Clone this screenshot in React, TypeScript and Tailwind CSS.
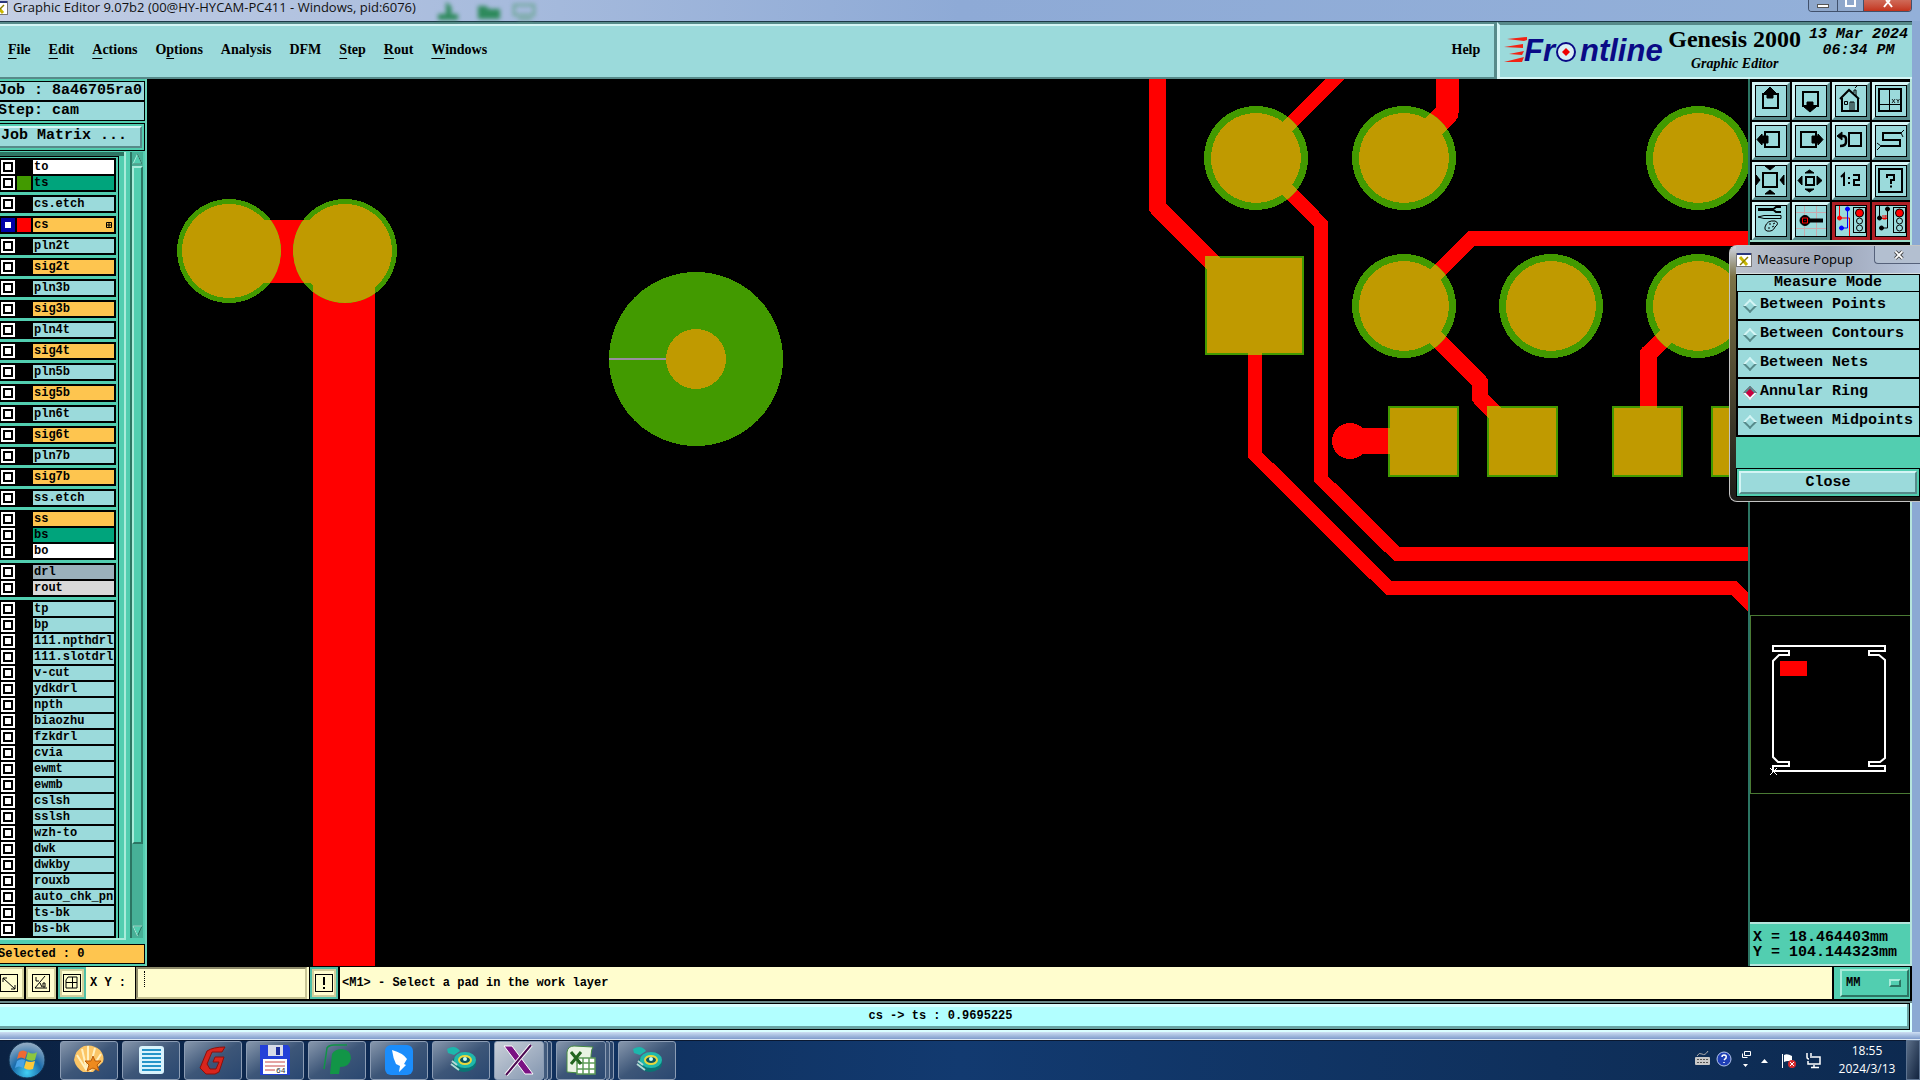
import type { ReactNode } from "react";

type Layer = { name: string; bg: string; swatch?: string; work?: boolean };

const AQUA = "bg-[#9bdadb]";
const ORANGE = "bg-[#fec54f]";

const mono = "font-['Liberation_Mono',monospace] font-bold";
const serif = "font-['Liberation_Serif',serif] font-bold";
const sans = "font-['Open_Sans','Noto_Sans',sans-serif]";
const raised = "border-t-[#d4f5f5] border-l-[#d4f5f5] border-b-[#578a8a] border-r-[#578a8a]";

const innerLayers: Layer[][] = ["2t", "3b", "4t", "5b", "6t", "7b"].flatMap((n) => [
  [{ name: `pln${n}`, bg: AQUA }],
  [{ name: `sig${n}`, bg: ORANGE }],
]);

const drawingLayers = [
  "tp", "bp", "111.npthdrl", "111.slotdrl", "v-cut", "ydkdrl", "npth", "biaozhu",
  "fzkdrl", "cvia", "ewmt", "ewmb", "cslsh", "sslsh", "wzh-to", "dwk", "dwkby",
  "rouxb", "auto_chk_pnl", "ts-bk", "bs-bk",
];

const layerGroups: Layer[][] = [
  [
    { name: "to", bg: "bg-white" },
    { name: "ts", bg: "bg-[#00a47c]", swatch: "bg-[#429a00]" },
  ],
  [{ name: "cs.etch", bg: AQUA }],
  [{ name: "cs", bg: ORANGE, swatch: "bg-[#ff0000]", work: true }],
  ...innerLayers,
  [{ name: "ss.etch", bg: AQUA }],
  [
    { name: "ss", bg: ORANGE },
    { name: "bs", bg: "bg-[#00a47c]" },
    { name: "bo", bg: "bg-white" },
  ],
  [
    { name: "drl", bg: "bg-[#9bb1bb]" },
    { name: "rout", bg: "bg-[#d9d9d9]" },
  ],
  drawingLayers.map((name) => ({ name, bg: AQUA })),
];

const menus = [
  ["", "F", "ile"],
  ["", "E", "dit"],
  ["", "A", "ctions"],
  ["O", "p", "tions"],
  ["Analysis", "", ""],
  ["DFM", "", ""],
  ["", "S", "tep"],
  ["", "R", "out"],
  ["", "W", "indows"],
];

const measureModes = [
  "Between Points",
  "Between Contours",
  "Between Nets",
  "Annular Ring",
  "Between Midpoints",
];

const TrafficLight = () => (
  <>
    <rect x="18.5" y="2.5" width="12" height="25" />
    <circle cx="24.5" cy="8" r="4" fill="#f00" />
    <circle cx="24.5" cy="16" r="3" />
    <circle cx="24.5" cy="23" r="3" />
  </>
);

const tools: { label: string; red?: boolean; icon: ReactNode }[] = [
  {
    label: "Pan up",
    icon: (
      <>
        <rect x="8" y="9" width="15" height="14" strokeWidth="2" />
        <path d="M15 2 L21 8 H18 V13 H12 V8 H9 Z" fill="#000" />
      </>
    ),
  },
  {
    label: "Pan down",
    icon: (
      <>
        <rect x="8" y="7" width="15" height="14" strokeWidth="2" />
        <path d="M15 27 L21 22 H18 V17 H12 V22 H9 Z" fill="#000" />
      </>
    ),
  },
  {
    label: "Home",
    icon: (
      <>
        <path d="M5 14 L14 5 L24 14 M7 13 V26 H23 V13" strokeWidth="2" />
        <path d="M19 8 V5 H21 V11 M20 3 L22 1 M15 26 V17 H19 V26 M17 17 V26 M9.500 16.500 H12.500 V19.500 H9.500 Z" />
      </>
    ),
  },
  {
    label: "Window XY",
    icon: (
      <>
        <rect x="4" y="4" width="22" height="22" strokeWidth="2" />
        <path d="M14.500 4 V26 M4 19.500 H26" />
        <path d="M17 14 L20 18 M20 14 L17 18 M21.500 14 L23 16 L24.500 14 M23 16 V18" strokeWidth=".8" />
      </>
    ),
  },
  {
    label: "Pan left",
    icon: (
      <>
        <rect x="10" y="7" width="14" height="15" strokeWidth="2" />
        <path d="M2 14.500 L7 9 V11 H13 V18 H7 V20 Z" fill="#000" />
      </>
    ),
  },
  {
    label: "Pan right",
    icon: (
      <>
        <rect x="6" y="7" width="15" height="15" strokeWidth="2" />
        <path d="M28 14.500 L23 9 V11 H17 V18 H23 V20 Z" fill="#000" />
      </>
    ),
  },
  {
    label: "Previous view",
    icon: (
      <>
        <rect x="14" y="8" width="12" height="13" strokeWidth="2" />
        <path d="M5 11 H8 Q11 11 11 14 V17 Q11 21 5 21" strokeWidth="2.500" />
        <path d="M2 11 L7 7 V15 Z" fill="#000" />
      </>
    ),
  },
  {
    label: "Serpentine",
    icon: (
      <>
        <path d="M26 8 H8 V15 H25 V21 H6" strokeWidth="2" />
        <path d="M26 8 L29 5 M26 8 L28 12 M6 21 L2 18 M6 21 L2 25" />
      </>
    ),
  },
  {
    label: "Zoom out",
    icon: (
      <>
        <rect x="8" y="8" width="14" height="14" strokeWidth="2" />
        <path d="M10 1 H20 L15 5 Z M10 29 H20 L15 25 Z M1 10 V20 L5 15 Z M29 10 V20 L25 15 Z" fill="#000" />
      </>
    ),
  },
  {
    label: "Zoom in",
    icon: (
      <>
        <rect x="11" y="12" width="8" height="8" strokeWidth="2" />
        <path d="M10 8 H19 L14.500 5 Z M10 24 H19 L14.500 27 Z M7 11 V20 L3 15.500 Z M22 11 V20 L27 15.500 Z" fill="#000" />
      </>
    ),
  },
  {
    label: "Scale",
    icon: (
      <path d="M6 12 L9 9 V21 M13 13 H15 M13 18 H15 M18 10 H24 V15 H19 V20 H25" strokeWidth="2" />
    ),
  },
  {
    label: "Help",
    icon: (
      <>
        <rect x="4" y="4" width="23" height="23" strokeWidth="2" />
        <path d="M12 13 V10 H19 V15 H16 V19 M15 21.500 H17" strokeWidth="2" />
      </>
    ),
  },
  {
    label: "Edit tools",
    icon: (
      <>
        <path d="M3 4.500 H18" strokeWidth="3" />
        <path d="M26 2 H21 L18 4.500 L21 7 H26" strokeWidth="2" />
        <path d="M3 12 L9 10.500 H26 V13.500 H9 Z" />
        <path d="M10 22 Q12 15 20 16 Q25 18 20 22 Q18 27 12 26 Q9 25 10 22 M14 19 H16 M18 19 L20 18 M13 23 H15 M17 22 L19 21" />
      </>
    ),
  },
  {
    label: "Pad",
    icon: (
      <>
        <path d="M9.500 1 V31 M21.500 1 V31 M1 7.500 H31 M1 23.500 H31" stroke="#c9a9ad" />
        <path d="M14 15.500 H28" strokeWidth="4" />
        <circle cx="10" cy="15.500" r="5" fill="#000" />
        <path d="M7.500 13 H12.500 V18 H7.500 Z M10 15 V16" stroke="#f00" />
      </>
    ),
  },
  {
    label: "Net highlight",
    red: true,
    icon: (
      <>
        <path d="M4.500 1 V13 H14.500 V31" stroke="#f00" />
        <path d="M12.500 4 V23 H6" stroke="#00f" />
        <circle cx="12.500" cy="4" r="2" fill="#00f" stroke="#00f" />
        <circle cx="6.500" cy="23" r="2" fill="#00f" stroke="#00f" />
        <circle cx="4.500" cy="13" r="2" fill="#f00" stroke="#f00" />
        <TrafficLight />
      </>
    ),
  },
  {
    label: "Net check",
    red: true,
    icon: (
      <>
        <path d="M4.500 1 V13 H7 M12.500 4 V23 H7" />
        <circle cx="12.500" cy="4" r="2" fill="#000" />
        <circle cx="6.500" cy="23" r="2" fill="#000" />
        <circle cx="4.500" cy="13" r="2" fill="#000" />
        <path d="M8 10 V14 H11 V10 M10 10 V14 M7 13.500 H12" stroke="#e00" />
        <TrafficLight />
      </>
    ),
  },
];

const XLogo = () => (
  <svg viewBox="0 0 16 16" className="h-4 w-4 shrink-0">
    <rect x=".5" y="1.500" width="15" height="13" fill="#fff" stroke="#777" />
    <rect x="1" y="1" width="14" height="2" fill="#29377c" />
    <path d="M4 5 L11 13" stroke="#c9b800" strokeWidth="3" />
    <path d="M12 5 L4 13" stroke="#8a7e00" strokeWidth="1.500" />
  </svg>
);

const Brand = () => (
  <svg viewBox="0 0 162 36" className="h-9 w-[162px] shrink-0">
    <path d="M3 7 L23 5 V8 L20 9 Z M0 15 L19 12 V16 Z M5 22 L20 19 L18 23 Z M0 30 L20 25 L18 30 Z" fill="#f22314" />
    <g fill="#0a0a86" fontFamily="Liberation Sans, sans-serif" fontWeight="bold" fontStyle="italic" fontSize="31">
      <text x="20" y="29">Fr</text>
      <text x="76" y="29">ntline</text>
    </g>
    <circle cx="62" cy="20" r="9" fill="#d9f0f4" stroke="#0a0a86" strokeWidth="2" />
    <path d="M62 16 L66 20 L62 24 L58 20 Z" fill="#e00" />
  </svg>
);

const TitleBar = () => (
  <header className="flex h-[21px] items-start justify-between bg-linear-to-r from-[#c3cee4] via-[#8eaad6] to-[#93b0d9] pr-1">
    <div className="flex min-w-0 flex-1 items-start">
      <div className="-ml-2">
        <XLogo />
      </div>
      <h1 className={`${sans} pl-[5px] text-[13px] leading-[14px] whitespace-nowrap text-[#111]`}>
        Graphic Editor 9.07b2 (00@HY-HYCAM-PC411 - Windows, pid:6076)
      </h1>
      <svg viewBox="0 0 200 21" className="h-[21px] w-[200px] blur-[2px]">
        <path d="M30 2 Q38 6 35 14 H42 V20 H22 V14 H30 Z M62 6 H70 L73 9 H84 V19 H62 Z" fill="#2e8a5c" />
        <path d="M98 5 H118 V15 H98 Z M102 19 H116" fill="none" stroke="#62a287" strokeWidth="2" />
      </svg>
    </div>
    <div className="mr-1 flex h-3 shrink-0 overflow-hidden rounded-b border border-t-0 border-[#41516c]">
      <button aria-label="Minimize" className="flex h-3 w-7 items-end justify-center bg-[#8ea7cb] pb-1">
        <span className="h-1 w-3 border border-[#555] bg-white" />
      </button>
      <button aria-label="Maximize" className="flex h-3 w-[27px] items-start justify-center border-x border-[#41516c] bg-[#8ea7cb]">
        <span className="h-[7px] w-[11px] border-2 border-t-0 border-white" />
      </button>
      <button aria-label="Close window" className="flex h-3 w-[47px] items-start justify-center bg-linear-to-b from-[#cf6a58] to-[#c22a12]">
        <svg viewBox="0 0 12 8" className="h-2 w-3">
          <path d="M2 7 L6 2 L10 7 M4 0 L6 2 L8 0" fill="none" stroke="#fff" strokeWidth="2" />
        </svg>
      </button>
    </div>
  </header>
);

const MenuBar = () => (
  <div className="flex h-[58px] border-t border-[#1c3846]">
    <nav className={`${serif} ${AQUA} flex flex-1 items-center border-t-2 border-r-[3px] border-b-2 border-[#578a8a] pr-3.5 pb-0.5 pl-2 text-[14px] text-black shadow-[inset_0_2px_#d4f5f5]`}>
      <div className="flex flex-1 gap-[18px]">
        {menus.map(([before, key, after]) => (
          <button key={before + key + after} className="leading-5">
            {before}
            <span className="underline underline-offset-4">{key}</span>
            {after}
          </button>
        ))}
      </div>
      <button className="leading-5">Help</button>
    </nav>
    <div className={`${AQUA} flex border-t-[3px] border-b-2 border-l-[3px] border-t-[#578a8a] border-b-[#d4f5f5] border-l-[#d4f5f5] pr-1 pl-1 text-black`}>
      <div className="pt-[7px]">
        <Brand />
      </div>
      <div className={`${serif} pr-0.5 pl-0.5 text-center`}>
        <p className="text-[24px] leading-7">Genesis 2000</p>
        <p className="pt-px text-[14px] leading-5 italic">Graphic Editor</p>
      </div>
      <div className="pt-0.5 pl-1.5 text-center font-['Liberation_Mono',monospace] text-[15px] leading-4 font-bold italic">
        <p>13 Mar 2024</p>
        <p>06:34 PM</p>
      </div>
    </div>
  </div>
);

const LayerRow = ({ layer }: { layer: Layer }) => (
  <label className="flex h-4 items-start pl-px">
    <input
      type="checkbox"
      className={`h-3.5 w-3.5 shrink-0 appearance-none border-2 ${
        layer.work
          ? "border-[#0000a8] bg-white shadow-[inset_0_0_0_2px_#0000a8]"
          : "border-white bg-white shadow-[inset_0_0_0_2px_#000]"
      }`}
    />
    <span className={`ml-0.5 h-3.5 w-3.5 shrink-0 ${layer.swatch ?? "bg-black"}`} />
    <span className={`${layer.bg} ml-0.5 flex h-3.5 w-[81px] items-center justify-between overflow-hidden pl-px text-[12px] leading-[14px] text-black`}>
      {layer.name}
      {layer.work && (
        <svg viewBox="0 0 6 6" className="mr-0.5 h-1.5 w-1.5">
          <path d="M.5 .5 H5.500 V5.500 H.5 Z M3 .5 V5.500 M.5 3 H5.500" fill="none" stroke="#000" />
        </svg>
      )}
    </span>
  </label>
);

const LayerPanel = () => (
  <aside className={`${mono} flex w-[147px] shrink-0 flex-col border-r-2 border-[#6cd4bc] bg-[#52ceb0] pt-0.5 whitespace-nowrap text-black`}>
    <div className={`${AQUA} border border-l-0 border-black text-[15px] leading-[18px]`}>
      <p className="border-b-2 border-black">
        <span className="-ml-0.5">Job : 8a46705ra0</span>
      </p>
      <p>
        <span className="-ml-0.5">Step: cam</span>
      </p>
    </div>
    <div className="mt-0.5 border border-l-0 border-black py-0.5 pr-0.5">
      <button className={`${AQUA} ${raised} block h-[22px] w-full border-2 border-l-0 pb-0.5 pl-px text-left text-[15px] leading-4`}>
        Job Matrix ...
      </button>
    </div>
    <div className="mt-px flex">
      <div className="w-[124px] shrink-0 overflow-hidden border-t-4 border-[#2c7563]">
        <div className="flex w-[119px] flex-col gap-[3px] border-t border-r border-black pt-px">
          {layerGroups.map((group) => (
            <div key={group[0].name} className="w-[116px] bg-black pt-0.5">
              {group.map((layer) => (
                <LayerRow key={layer.name} layer={layer} />
              ))}
            </div>
          ))}
        </div>
      </div>
      <div className="mr-1 w-0.5 bg-[#a8ecda]" />
      <div className="flex w-[13px] flex-col border-l-2 border-[#2c7563] bg-[#47b097]">
        <button aria-label="Scroll up" className="h-3.5">
          <svg viewBox="0 0 11 12" className="h-3 w-[11px]">
            <path d="M1 11 L5.500 1 L10 11 Z" fill="#52ceb0" stroke="#a8ecda" />
            <path d="M5.500 1 L10 11 H1" fill="none" stroke="#2c7563" />
          </svg>
        </button>
        <div className="flex-1 border-2 border-t-[#a8ecda] border-r-[#2c7563] border-b-[#2c7563] border-l-[#a8ecda] bg-[#52ceb0]" />
        <div className="h-20" />
        <button aria-label="Scroll down" className="h-3.5">
          <svg viewBox="0 0 11 12" className="h-3 w-[11px]">
            <path d="M1 1 H10 L5.500 11 Z" fill="#52ceb0" stroke="#2c7563" />
            <path d="M10 1 H1 L5.500 11" fill="none" stroke="#a8ecda" />
          </svg>
        </button>
      </div>
    </div>
    <div className="h-0.5 w-[126px] bg-[#a8ecda]" />
    <p className={`${ORANGE} mt-1 mb-0.5 h-5 border border-l-0 border-black text-[12px] leading-[18px]`}>
      <span className="-ml-0.5">Selected : 0</span>
    </p>
  </aside>
);

const pads = [
  [229, 251, 47], [345, 251, 47],
  [1256, 158, 45], [1404, 158, 45], [1698, 158, 45],
  [1404, 306, 45], [1551, 306, 45], [1698, 306, 45],
];
const smallPads = [1388, 1487, 1612, 1711];

const MaskShapes = () => (
  <>
    {pads.map(([x, y]) => (
      <circle key={`${x}-${y}`} cx={x} cy={y} r="52" />
    ))}
    <circle cx="696" cy="359" r="87" />
    <rect x="1205" y="256" width="99" height="99" />
    {smallPads.map((x) => (
      <rect key={x} x={x} y="406" width="71" height="71" />
    ))}
  </>
);

const Copper = ({ color }: { color: string }) => (
  <g fill={color} stroke="none">
    <g fill="none" stroke={color} strokeLinejoin="round">
      <path d="M229 251 H345" strokeWidth="63" />
      <path d="M344 251 V970" strokeWidth="62" />
      <path d="M1157 79 V207 L1225 275" strokeWidth="17" />
      <path d="M1256 158 L1345 69 M1256 158 L1321 224 V479" strokeWidth="14" />
      <path d="M1321 470 V479 L1397 554 H1760" strokeWidth="14" />
      <path d="M1447 70 V113 L1403 158" strokeWidth="23" />
      <path d="M1255 306 V455 L1389 588 H1734 L1765 619" strokeWidth="14" />
      <path d="M1404 306 L1472 238 H1760" strokeWidth="15" />
      <path d="M1404 306 L1480 382 V398 L1509 427" strokeWidth="16" />
      <path d="M1698 306 L1648 354 V420" strokeWidth="17" />
      <path d="M1350 441 H1400" strokeWidth="26" />
    </g>
    <circle cx="1350" cy="441" r="18" />
    {pads.map(([x, y, r]) => (
      <circle key={`${x}-${y}`} cx={x} cy={y} r={r} />
    ))}
    <circle cx="696" cy="359" r="30" />
    <rect x="1207" y="258" width="95" height="95" />
    {smallPads.map((x) => (
      <rect key={x} x={x + 2} y="408" width="67" height="67" />
    ))}
  </g>
);

const BoardView = () => (
  <main className="relative min-w-0 flex-1 bg-black">
    <svg
      viewBox="147 79 1601 887"
      preserveAspectRatio="xMinYMin slice"
      shapeRendering="crispEdges"
      className="absolute inset-0 h-full w-full"
    >
      <clipPath id="mask-openings">
        <MaskShapes />
      </clipPath>
      <Copper color="#ff0000" />
      <g fill="#429a00">
        <MaskShapes />
      </g>
      <g clipPath="url(#mask-openings)">
        <Copper color="#c09a00" />
      </g>
      <path d="M609 359 H666" stroke="#9a8fa0" strokeWidth="2" />
    </svg>
  </main>
);

const ToolPanel = () => (
  <aside className="flex w-[164px] shrink-0 flex-col border-r-2 border-l-2 border-r-[#b5e5dc] border-l-[#2c7563] bg-black">
    <div className="grid grid-cols-4 gap-0.5 border-b-2 border-[#9bdac8] pt-[3px] pl-0.5">
      {tools.map((tool) => (
        <button
          key={tool.label}
          aria-label={tool.label}
          className={`h-[38px] border-[3px] ${
            tool.red ? "border-[#b01f26] bg-[#9bdadb]" : `${AQUA} ${raised}`
          }`}
        >
          <svg viewBox="0 0 32 32" className="h-8 w-8" fill="none" stroke="#000">
            <rect x=".5" y=".5" width="31" height="31" />
            {tool.icon}
          </svg>
        </button>
      ))}
    </div>
    <div className="relative flex-1">
      <svg viewBox="1750 242 160 680" preserveAspectRatio="xMinYMin meet" className="absolute inset-0 h-full w-full" fill="none">
        <rect x="1750.500" y="615.500" width="162" height="178" stroke="#4a7a34" />
        <path
          d="M1773 646 H1885 V651 H1869 V655 H1879 L1885 660 V758 L1880 762 H1869 V766 H1885 V771 H1773 V766 H1789 V762 H1778 L1773 757 V661 L1779 655 H1789 V651 H1773 Z"
          stroke="#fff"
          strokeWidth="2"
        />
        <path d="M1770 768 L1777 775 M1777 768 L1770 775" stroke="#fff" />
        <rect x="1780" y="661" width="27" height="15" fill="#f00" />
      </svg>
    </div>
    <div className={`${mono} h-[44px] border-t-2 border-b-2 border-[#b5e5dc] bg-[#52ceb0] pt-1.5 pl-[3px] text-[15px] leading-[15px] text-black`}>
      <p>X = 18.464403mm</p>
      <p>Y = 104.144323mm</p>
    </div>
  </aside>
);

const IconFrame = ({ children }: { children: ReactNode }) => (
  <svg viewBox="0 0 18 18" className="h-[18px] w-[18px]" fill="none" stroke="#000">
    <rect x=".5" y=".5" width="17" height="17" />
    {children}
  </svg>
);

const paleButton =
  "flex items-center justify-center border-2 border-[#d2cf9d] bg-[#fffdce]";

const CommandRow = () => (
  <div className={`${mono} flex h-[35px] items-stretch border-t border-b-2 border-black bg-[#fffdce] text-[12px] text-black`}>
    <div className="flex w-[26px] border-r-2 border-black">
      <button aria-label="Measure" className={`${paleButton} w-6 border-l-0 pr-1`}>
        <IconFrame>
          <path d="M3 4 L15 15 M3 8 V4 H7 M11 15 H15 V11" />
        </IconFrame>
      </button>
    </div>
    <div className="flex w-8 border-r-2 border-black">
      <button aria-label="Angle" className={`${paleButton} w-full`}>
        <IconFrame>
          <path d="M3 14 L13 2 M3 14 H15 M4 3 V7 H7 M8 9 L10 13 M11 9 H13 V13 H11 Z" />
        </IconFrame>
      </button>
    </div>
    <div className="flex w-7 bg-[#4fbfa6] p-0.5">
      <button aria-label="Snap grid" className={`${paleButton} w-full`}>
        <IconFrame>
          <path d="M5 3 H14 V14 H3 V6 Z M9.500 3 V14 M3 8.500 H14" />
        </IconFrame>
      </button>
    </div>
    <label htmlFor="xy" className="flex w-[49px] items-center pl-1 whitespace-pre">
      X Y :
    </label>
    <div className="relative flex border-l border-black pr-0.5">
      <input
        id="xy"
        className="w-[171px] border-2 border-t-[#8f8c6c] border-r-[#c8c595] border-b-[#c8c595] border-l-[#8f8c6c] bg-[#fffdce] px-1"
      />
      <span className="pointer-events-none absolute top-1 left-2 h-4 border-l border-dotted border-black" />
    </div>
    <div className="flex w-[29px] border-l border-black bg-[#4fbfa6] p-0.5">
      <button aria-label="Alert" className={`${paleButton} w-full`}>
        <IconFrame>
          <path d="M9 3 V11 M9 13 V15" strokeWidth="2" />
        </IconFrame>
      </button>
    </div>
    <p className="flex flex-1 items-center border-l-2 border-black pl-0.5">
      &lt;M1&gt; - Select a pad in the work layer
    </p>
    <div className="relative w-20 border-r-2 border-l-2 border-black bg-[#52ceb0] py-0.5 pr-0.5 pl-1.5">
      <select
        aria-label="Units"
        className="h-[28px] w-[69px] appearance-none border-2 border-t-[#a8ecda] border-r-[#2c7563] border-b-[#2c7563] border-l-[#a8ecda] pl-1 text-[12px]"
      >
        <option>MM</option>
      </select>
      <span className="pointer-events-none absolute top-3 right-[9px] h-2 w-3 border-2 border-t-[#a8ecda] border-r-[#2c7563] border-b-[#2c7563] border-l-[#a8ecda]" />
    </div>
  </div>
);

const MeasurePopup = () => (
  <section className="absolute top-[245px] right-0 w-[191px] rounded-l-lg border border-r-0 border-[#c4c4c4] bg-linear-to-b from-[#cfd5e2] via-[#7d7346] via-[12%] to-[#1d1c18] pb-1 pl-1.5">
    <div className="flex h-[27px] items-center bg-linear-to-r from-[#bcc2cc] via-[#9ea6b8] to-[#b8c6dd]">
      <XLogo />
      <h2 className={`${sans} flex-1 pl-[5px] text-[13px] whitespace-nowrap text-black`}>Measure Popup</h2>
      <button aria-label="Close popup" className="h-[18px] w-[46px] shrink-0 self-start rounded-bl border border-t-0 border-r-0 border-[#55617a] bg-[#b3bfd0]">
        <svg viewBox="0 0 46 18" className="h-4 w-[46px]">
          <path d="M20 5 L28 13 M28 5 L20 13" stroke="#444" strokeWidth="4" />
          <path d="M20 5 L28 13 M28 5 L20 13" stroke="#fff" strokeWidth="2" />
        </svg>
      </button>
    </div>
    <fieldset className={`${mono} border-t border-[#d8e0e0] bg-[#52ceb0] text-[15px] text-black`}>
      <div className={`${AQUA} border border-black text-center leading-[16px]`}>Measure Mode</div>
      {measureModes.map((mode) => (
        <label key={mode} className={`${AQUA} flex h-[29px] items-center border-r border-b-2 border-l-2 border-black pl-1.5 whitespace-nowrap`}>
          <input
            type="radio"
            name="measure-mode"
            defaultChecked={mode === "Annular Ring"}
            className="mr-[5px] ml-px h-2.5 w-2.5 shrink-0 rotate-45 appearance-none border-2 border-t-[#d4f5f5] border-r-[#578a8a] border-b-[#578a8a] border-l-[#d4f5f5] checked:border-t-[#578a8a] checked:border-r-[#e8ffff] checked:border-b-[#e8ffff] checked:border-l-[#578a8a] checked:bg-[#c8003f]"
          />
          {mode}
        </label>
      ))}
      <div className="mt-[31px] border border-black p-0.5">
        <button className={`${AQUA} ${raised} block h-[23px] w-full border-2 leading-[18px]`}>Close</button>
      </div>
    </fieldset>
  </section>
);

const GenesisIcon = () => (
  <svg viewBox="0 0 32 32">
    <path d="M2 5 Q10 0 15 7 L9 11 L3 9 Z" fill="#1db7ac" />
    <ellipse cx="19" cy="19" rx="12" ry="9" fill="#0b7474" />
    <ellipse cx="20" cy="16" rx="11" ry="8" fill="#20b8ab" />
    <ellipse cx="20" cy="16" rx="6" ry="4" fill="#0a5560" stroke="#e8d73d" strokeWidth="2" />
    <circle cx="20" cy="15" r="2" fill="#c7fff5" />
    <path d="M6 20 L14 26 M7 17 L12 21" stroke="#b5d8d5" strokeWidth="2" />
  </svg>
);

const apps: { label: string; state?: "active" | "stack"; icon: ReactNode }[] = [
  {
    label: "Seashell",
    icon: (
      <svg viewBox="0 0 32 32">
        <path d="M10 28 Q3 24 1 16 Q2 6 11 2 Q20 0 27 6 Q32 12 30 18 L20 28 Z" fill="#fbc566" />
        <path d="M14 27 L4 11 M14 27 L9 5 M15 27 L15 2 M16 27 L22 4 M17 27 L28 10" stroke="#fff0c0" strokeWidth="2" />
        <path d="M20 12 L22 17 L28 17 L24 21 L26 27 L20 24 L14 27 L16 21 L12 17 L18 17 Z" fill="#ee8a1d" stroke="#b85b0a" />
      </svg>
    ),
  },
  {
    label: "Notepad",
    icon: (
      <svg viewBox="0 0 32 32">
        <rect x="4" y="2" width="25" height="28" rx="3" fill="#d9f3fd" />
        <path d="M7 6 H26 M7 10 H26 M7 14 H26 M7 18 H26 M7 22 H26 M7 26 H26" stroke="#2594c8" strokeWidth="2" />
      </svg>
    ),
  },
  {
    label: "G tool",
    icon: (
      <svg viewBox="0 0 32 32">
        <path d="M28 3 L25 8 H15 L10 20 L13 25 H19 L22 18 H16 L18 13 H27 L22 28 L18 30 H9 L3 24 L10 7 Q16 3 28 3 Z" fill="#d9251d" stroke="#8c100c" />
      </svg>
    ),
  },
  {
    label: "Save",
    icon: (
      <svg viewBox="0 0 32 32">
        <path d="M1 1 H29 L31 4 V31 H1 Z" fill="#2340d8" />
        <rect x="9" y="1" width="15" height="11" fill="#d7dbe8" />
        <rect x="17" y="3" width="4" height="8" fill="#1c2d9e" />
        <rect x="4" y="15" width="24" height="15" fill="#fff" />
        <path d="M6 18 H26 M6 22 H26 M6 26 H16" stroke="#c94848" />
        <text x="17" y="29" fontSize="8" fill="#333" fontFamily="Liberation Mono, monospace">64</text>
      </svg>
    ),
  },
  {
    label: "P tool",
    icon: (
      <svg viewBox="0 0 32 32">
        <path d="M3 25 L6 4 Q8 1 13 1 H26" fill="none" stroke="#119447" strokeWidth="1.500" />
        <path d="M9 30 L11 10 Q14 5 21 5 Q30 6 30 14 Q29 23 19 23 L18 30 Z" fill="#129547" />
      </svg>
    ),
  },
  {
    label: "DingTalk",
    icon: (
      <svg viewBox="0 0 32 32">
        <rect x="2" y="1" width="28" height="30" rx="6" fill="#1b8dfb" />
        <path d="M9 6 Q20 9 24 15 L21 20 L23 21 L16 28 L17 22 L13 20 Q10 14 9 6 Z" fill="#fff" />
      </svg>
    ),
  },
  { label: "Genesis", icon: <GenesisIcon /> },
  {
    label: "X server",
    state: "active",
    icon: (
      <svg viewBox="0 0 32 32">
        <path d="M1 2 H9 L30 30 H22 Z" fill="#7b1183" stroke="#fff" />
        <path d="M28 1 L3 31" stroke="#fff" strokeWidth="4" />
        <path d="M28 1 L3 31" stroke="#4c0a52" strokeWidth="2" />
      </svg>
    ),
  },
  {
    label: "Excel",
    state: "stack",
    icon: (
      <svg viewBox="0 0 32 32">
        <path d="M2 8 Q3 2 9 2 L28 3 Q25 6 26 30 L2 28 Z" fill="#e9f3e2" stroke="#468b43" />
        <path d="M12 14 H30 V30 H12 Z M12 19 H30 M12 25 H30 M18 14 V30 M24 14 V30" fill="#fff" stroke="#5d9c58" strokeWidth="1.500" />
        <path d="M6 8 L16 20 M16 8 L6 20" stroke="#23651f" strokeWidth="3" />
      </svg>
    ),
  },
  { label: "Genesis engine", icon: <GenesisIcon /> },
];

const AppButton = ({ app }: { app: (typeof apps)[number] }) => {
  const stacked = app.state !== undefined;
  return (
    <button aria-label={app.label} className="flex h-[39px] w-[58px]">
      <span
        className={`flex h-full flex-1 items-center justify-center rounded-[3px] border border-[#8b9cb4] ${
          app.state === "active"
            ? "bg-linear-to-br from-[#c9cfd8] to-[#8396b0]"
            : "bg-linear-to-br from-[#8797ac] via-[#3d5678] to-[#2a4871]"
        }`}
      >
        <span className="block h-8 w-8">{app.icon}</span>
      </span>
      {stacked && (
        <>
          <span className="h-full w-1 rounded-r-[3px] border-y border-r border-[#8b9cb4] bg-[#415a7c]" />
          <span className="h-full w-1 rounded-r-[3px] border-y border-r border-[#8b9cb4] bg-[#2b466c]" />
        </>
      )}
    </button>
  );
};

const Taskbar = () => (
  <footer className="flex h-[41px] items-center border-t border-[#dbe8f5] bg-linear-to-r from-[#0b2243] via-[#123a70] to-[#0d2a50] shadow-[inset_0_1px_#0a1830]">
    <button aria-label="Start" className="flex w-[60px] items-center pl-2">
      <svg viewBox="0 0 38 38" className="h-[38px] w-[38px]">
        <defs>
          <radialGradient id="orb" cx=".5" cy=".85" r=".8">
            <stop offset="0" stopColor="#41d0f5" />
            <stop offset=".5" stopColor="#1b6cab" />
            <stop offset="1" stopColor="#8fa9c2" />
          </radialGradient>
        </defs>
        <circle cx="19" cy="19" r="18" fill="url(#orb)" stroke="#11304f" />
        <path d="M11 11 Q15 8 19 11 L17 18 Q13 15 9 18 Z" fill="#ef6a33" />
        <path d="M20 11 Q25 14 29 11 L27 19 Q23 21 18 18 Z" fill="#8cc63f" />
        <path d="M9 20 Q13 17 17 19 L15 27 Q11 24 7 27 Z" fill="#4aa3e6" />
        <path d="M18 20 Q22 22 27 20 L25 28 Q20 30 16 27 Z" fill="#fdc93a" />
      </svg>
    </button>
    <div className="flex flex-1 gap-1">
      {apps.map((app) => (
        <AppButton key={app.label} app={app} />
      ))}
    </div>
    <svg viewBox="0 0 130 24" className="h-6 w-[130px]" fill="none">
      <rect x="1" y="9" width="15" height="8" rx="1" fill="#c9c9c9" />
      <path d="M3 11.500 H14 M3 14.500 H14" stroke="#555" strokeDasharray="2 1" />
      <path d="M3 8 Q5 4 8 6 T14 3" stroke="#a9a9a9" />
      <circle cx="30" cy="11" r="7" fill="#1f3fb5" stroke="#b6c7ec" />
      <path d="M28 9 Q28 7 30 7 Q33 7 32 10 L30 12 M30 14 V15" stroke="#fff" strokeWidth="1.500" />
      <path d="M50.500 3.500 H56.500 V7.500 H50.500 Z M48.500 5.500 V9.500 H53.500" stroke="#fff" />
      <path d="M49 16 H54 L51.500 19 Z M67 15 L70.500 11 L74 15 Z" fill="#fff" />
      <path d="M88.500 6 V20" stroke="#fff" />
      <path d="M90 7 Q93 5 98 8 V14 Q94 12 90 14 Z" fill="#fff" />
      <circle cx="98" cy="16" r="4" fill="#d9292c" />
      <path d="M96 14 L100 18 M100 14 L96 18" stroke="#fff" />
      <path d="M116 9 H126 V16 H114 V13 M117 19.500 H125 M120 17 V19 M113 5 V9 Q113 11 115 11 M117 5 V8" stroke="#fff" strokeWidth="1.500" />
    </svg>
    <div className={`${sans} w-[82px] pl-1 text-center text-[12px] leading-[18px] text-white`}>
      <p>18:55</p>
      <p>2024/3/13</p>
    </div>
    <button aria-label="Show desktop" className="h-full w-3.5 border border-[#5d7390] bg-linear-to-br from-[#5c6f88] to-[#12243f]" />
  </footer>
);

const App = () => (
  <div className="relative flex min-h-screen flex-col overflow-hidden bg-[#8ba9d3]">
    <TitleBar />
    <div className="mr-2 flex flex-1 flex-col">
      <MenuBar />
      <div className="flex flex-1">
        <LayerPanel />
        <BoardView />
        <ToolPanel />
      </div>
      <CommandRow />
      <div className="border-t-2 border-b-2 border-t-[#6c8a8a] border-b-[#d9ffff] bg-[#d9ffff]">
        <p className={`${mono} mr-0.5 border-y border-r border-black bg-[#b2ffff] py-1 text-center text-[12px] leading-[17px] text-black shadow-[inset_-2px_-3px_#6ba3a3,inset_0_3px_#d9ffff]`}>
          <span className="pr-7">cs -&gt; ts : 0.9695225</span>
        </p>
      </div>
    </div>
    <div className="h-[7px] bg-linear-to-b from-[#cfe0f3] to-[#7f9ccb]" />
    <Taskbar />
    <MeasurePopup />
  </div>
);

export default App;
